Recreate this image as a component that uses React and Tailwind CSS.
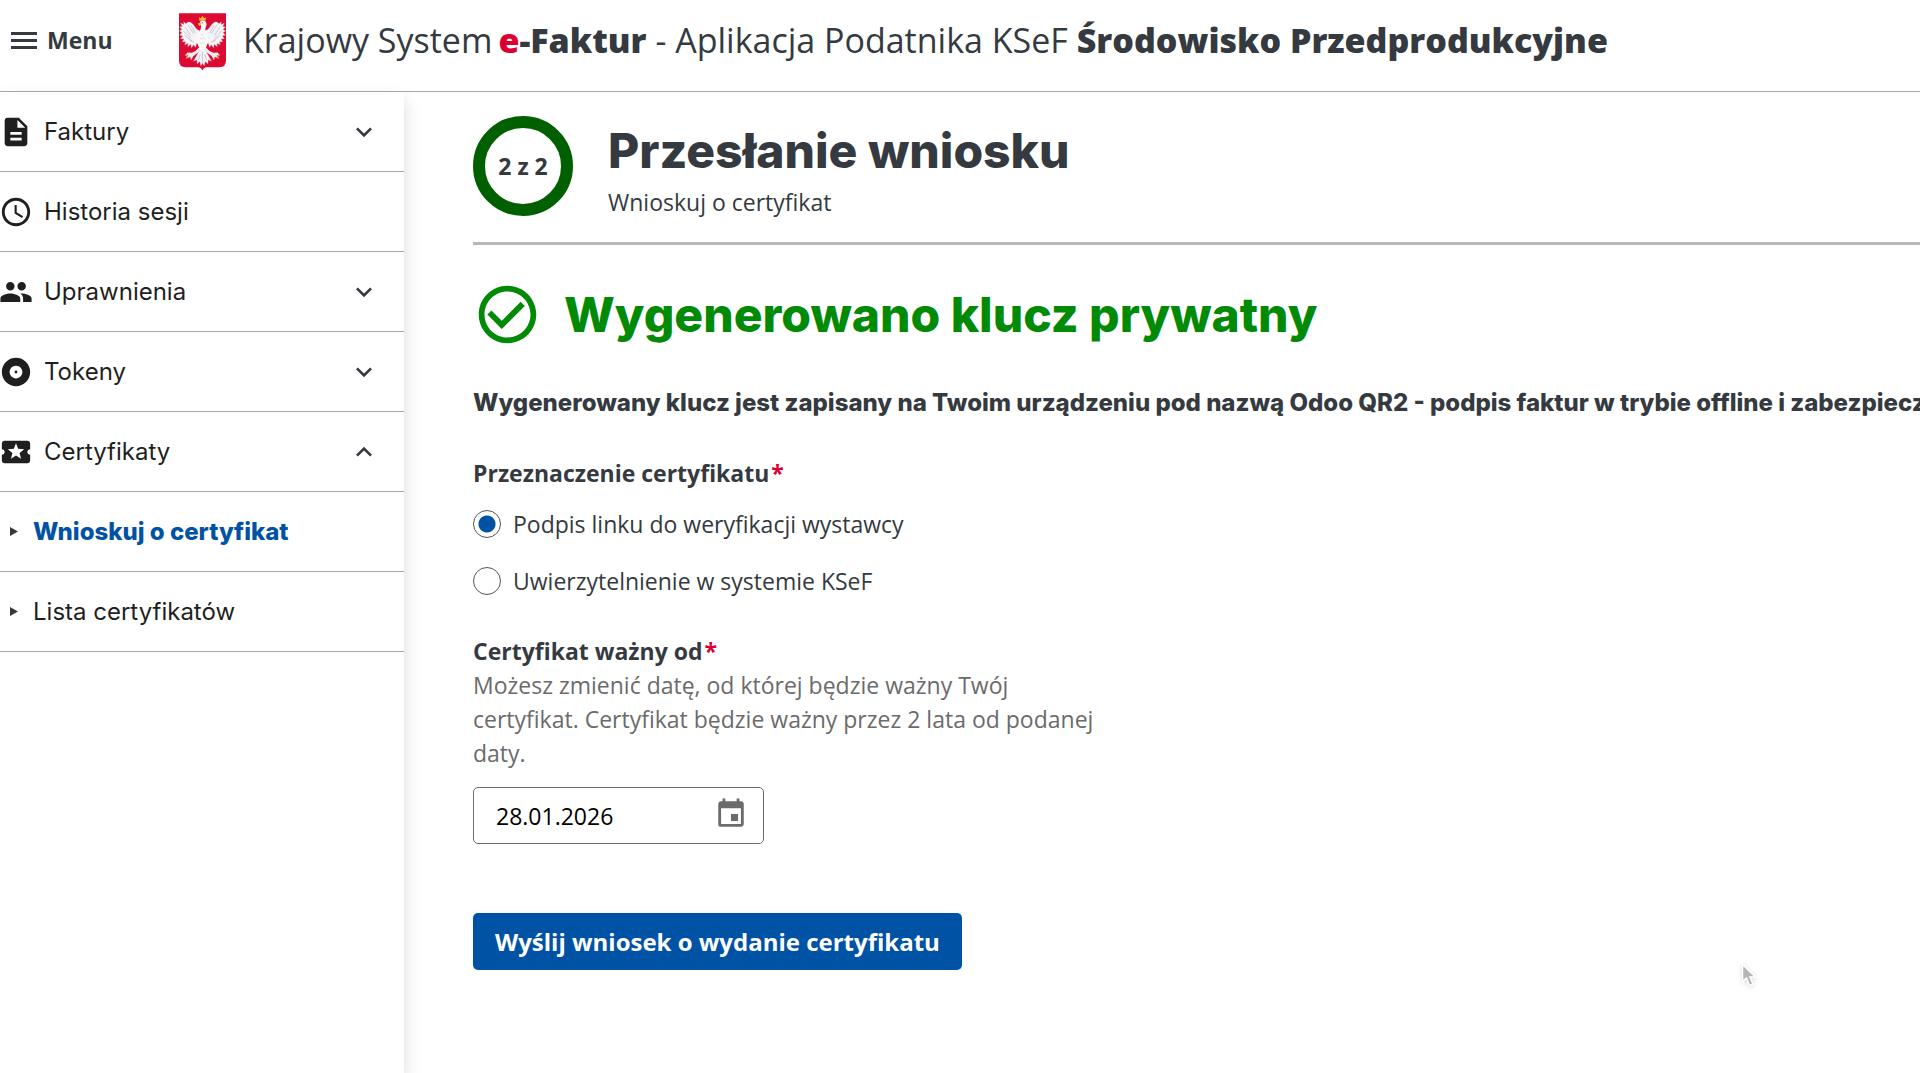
import React, { useState } from "react";
import {
  MdAccessTime,
  MdAlbum,
  MdCheckCircleOutline,
  MdDescription,
  MdEvent,
  MdExpandLess,
  MdExpandMore,
  MdLocalActivity,
  MdPeople,
} from "react-icons/md";

const menuItems = [
  { name: "Faktury", icon: MdDescription, expandable: true },
  { name: "Historia sesji", icon: MdAccessTime, expandable: false },
  { name: "Uprawnienia", icon: MdPeople, expandable: true },
  { name: "Tokeny", icon: MdAlbum, expandable: true },
  { name: "Certyfikaty", icon: MdLocalActivity, expandable: true },
];

const certificateLinks = ["Wnioskuj o certyfikat", "Lista certyfikatów"];

const purposes = [
  { id: "link", label: "Podpis linku do weryfikacji wystawcy" },
  { id: "auth", label: "Uwierzytelnienie w systemie KSeF" },
];

const Emblem = () => (
  <svg viewBox="27 25 140 172" className="w-[47px] h-[58px] shrink-0" role="img" aria-label="Godło Polski">
    <path d="M27 25H167V166Q167 186 147 186H108Q100 187 97 196Q94 187 86 186H47Q27 186 27 166Z" fill="#dc0a32" />
    {/* Wings */}
    <g fill="#f4f3f5" stroke="#cfc6d0" strokeWidth="1">
      <path d="M88 76C80 78 76 66 67 57C61 50 53 49 48 57L41 51L42 59L32 55L37 65L29 66L36 74L28 78L36 83L29 90L38 93L32 101L42 102L37 110L47 110L44 119L54 115L53 125L62 118L64 128L71 119L76 127L80 115L88 118Z" />
      <path d="M106 76C114 78 118 66 127 57C133 50 141 49 146 57L153 51L152 59L162 55L157 65L165 66L158 74L166 78L158 83L165 90L156 93L162 101L152 102L157 110L147 110L150 119L140 115L141 125L132 118L130 128L123 119L118 127L114 115L106 118Z" />
    </g>
    <path
      d="M45 66L62 92M40 78L62 100M44 92L66 108M54 60L70 86M63 62L75 84M58 106L72 112M149 66L132 92M154 78L132 100M150 92L128 108M140 60L124 86M131 62L119 84M136 106L122 112"
      stroke="#bdb2bf"
      strokeWidth="2"
      fill="none"
    />
    {/* Tail and legs */}
    <path d="M88 126L76 138L65 143L52 142L47 149L55 151L51 160L60 155L64 164L70 153L84 142L110 142L124 153L130 164L134 155L143 160L139 151L147 149L142 142L129 143L118 138L106 126Z" fill="#efedf0" />
    <path d="M90 132L78 154L70 168L80 164L81 176L89 169L92 182L97 174L102 182L105 169L113 176L114 164L124 168L116 154L104 132Z" fill="#f4f3f5" stroke="#cfc6d0" />
    <path d="M97 140V172M90 148L85 165M104 148L109 165" stroke="#bdb2bf" strokeWidth="2" />
    <path d="M45 149L52 153L49 160M60 155L64 164M149 149L142 153L145 160M134 155L130 164" stroke="#e0b060" strokeWidth="3" fill="none" />
    {/* Body, neck and head */}
    <path d="M87 58L91 49Q99 43 106 50Q112 59 106 68Q103 75 110 84Q118 103 109 124Q104 136 97 139Q90 136 85 124Q76 103 84 85Q93 75 93 65L91 60Z" fill="#fbfafb" />
    <path d="M92 86L96 91L101 86M88 98L94 103L100 98L106 103M88 112L94 117L100 112L106 117" stroke="#cfc6d0" strokeWidth="2" fill="none" />
    <path d="M93 53L83 56L87 63L93 59Z" fill="#e8b53c" />
    <path d="M88 48L86 37L92 40L97 33L102 40L108 37L106 48Z" fill="#f0b72c" />
    <circle cx="97" cy="54" r="2" fill="#a44a55" />
  </svg>
);

const App = () => {
  const [certOpen, setCertOpen] = useState(true);
  const [purpose, setPurpose] = useState("link");
  const [date, setDate] = useState("28.01.2026");

  return (
    <div className="relative min-h-screen flex flex-col overflow-hidden bg-white text-[#343a40] text-[23px] leading-[34px] font-['Open_Sans',sans-serif]">
      {/* Header */}
      <header className="h-[92px] shrink-0 flex items-start border-b border-[#a9a9a9] pl-[11px] pt-[13px]">
        <button className="flex items-center gap-[10px] h-[54px] w-[168px] font-bold">
          <span className="flex flex-col gap-1">
            <span className="w-[26px] h-[3px] bg-[#343a40]" />
            <span className="w-[26px] h-[3px] bg-[#343a40]" />
            <span className="w-[26px] h-[3px] bg-[#343a40]" />
          </span>
          Menu
        </button>
        <Emblem />
        <p className="flex ml-[17px] h-[54px] items-center text-[34px] whitespace-pre">
          <span className="mr-1.5">Krajowy System</span>
          <span className="font-extrabold text-[#dc0032]">e</span>
          <span className="font-extrabold">-Faktur</span>
          <span> - Aplikacja Podatnika KSeF </span>
          <span className="font-extrabold">Środowisko Przedprodukcyjne</span>
        </p>
      </header>

      <div className="flex flex-1">
        {/* Sidebar */}
        <nav className="w-[404px] shrink-0 shadow-[0_8px_16px_rgba(0,0,0,0.15)] text-2xl text-[#1f1f1f] font-['Inter',sans-serif]">
          {menuItems.map(item => {
            const Icon = item.icon;
            const isCert = item.name === "Certyfikaty";
            const Chevron = isCert && certOpen ? MdExpandLess : MdExpandMore;
            return (
              <button
                key={item.name}
                onClick={() => isCert && setCertOpen(!certOpen)}
                className="w-full h-20 flex items-center border-b border-[#a9a9a9] pr-6 text-left"
              >
                <Icon className="w-[34px] h-[34px] -ml-px mr-[11px]" />
                <span className="flex-1">{item.name}</span>
                {item.expandable && <Chevron className="w-8 h-8 text-[#343a40]" />}
              </button>
            );
          })}
          {certOpen &&
            certificateLinks.map((link, i) => (
              <a
                key={link}
                href="#"
                className={`h-20 flex items-center gap-[15px] border-b border-[#a9a9a9] pl-[10px] ${
                  i === 0 ? "font-extrabold text-[#0052a5]" : ""
                }`}
              >
                <svg viewBox="0 0 8 9" className="w-2 h-[9px] text-[#343a40]">
                  <path d="M0 0L8 4.5L0 9Z" fill="currentColor" />
                </svg>
                {link}
              </a>
            ))}
        </nav>

        {/* Form */}
        <main className="flex-1 min-w-0 pl-[69px] pt-6">
          <div className="flex gap-[35px] pb-[23px] border-b-[3px] border-[#b5b8b5]">
            <div className="w-[100px] h-[100px] shrink-0 rounded-full border-[12px] border-[#006000] flex items-center justify-center font-bold">
              2 z 2
            </div>
            <div>
              <h1 className="text-5xl leading-[69px] font-extrabold font-['Inter',sans-serif]">Przesłanie wniosku</h1>
              <p>Wnioskuj o certyfikat</p>
            </div>
          </div>

          <div className="flex items-center gap-[22px] mt-[35px] text-[#008a05]">
            <MdCheckCircleOutline className="w-[69px] h-[69px] shrink-0" />
            <h2 className="text-5xl leading-[69px] font-extrabold font-['Inter',sans-serif]">Wygenerowano klucz prywatny</h2>
          </div>

          <p className="mt-[37px] text-2xl leading-[34px] font-extrabold whitespace-nowrap font-['Inter',sans-serif]">
            Wygenerowany klucz jest zapisany na Twoim urządzeniu pod nazwą Odoo QR2 - podpis faktur w trybie offline i zabezpieczony
          </p>

          <form onSubmit={e => e.preventDefault()}>
            <fieldset className="mt-9">
              <legend className="font-bold">
                Przeznaczenie certyfikatu<span className="ml-0.5 text-[#dc0032]">*</span>
              </legend>
              <div className="flex flex-col gap-[23px] mt-[17px]">
                {purposes.map(p => (
                  <label key={p.id} className="flex items-center gap-3">
                    <input
                      type="radio"
                      name="purpose"
                      checked={purpose === p.id}
                      onChange={() => setPurpose(p.id)}
                      className="appearance-none w-7 h-7 rounded-full border border-[#555555] bg-white checked:bg-[radial-gradient(circle,#0052a5_8px,#ffffff_9px)]"
                    />
                    {p.label}
                  </label>
                ))}
              </div>
            </fieldset>

            <label htmlFor="valid-from" className="block mt-9 font-bold">
              Certyfikat ważny od<span className="ml-0.5 text-[#dc0032]">*</span>
            </label>
            <p className="max-w-[630px] text-[#6b6b6b]">
              Możesz zmienić datę, od której będzie ważny Twój certyfikat. Certyfikat będzie ważny przez 2 lata od podanej
              daty.
            </p>
            <div className="flex items-center w-[291px] h-[57px] mt-[17px] pl-[22px] pr-[15px] border border-[#6b6b6b] rounded-[5px]">
              <input
                id="valid-from"
                type="text"
                value={date}
                onChange={e => setDate(e.target.value)}
                className="flex-1 min-w-0 text-black outline-none"
              />
              <button type="button" aria-label="Wybierz datę">
                <MdEvent className="w-[34px] h-[34px] mb-1 text-[#6b6b6b]" />
              </button>
            </div>
            <button type="submit" className="h-[57px] mt-[69px] px-[22px] rounded-[5px] bg-[#0052a5] text-white text-2xl font-bold">
              Wyślij wniosek o wydanie certyfikatu
            </button>
          </form>
        </main>
      </div>

      {/* Mouse pointer */}
      <svg viewBox="0 0 16 26" className="absolute left-[1741px] top-[963px] w-4 h-[26px] drop-shadow-sm">
        <path d="M1.500 1.500V18.500L5.500 15L8.500 22.500L12 21L9 14H14.500Z" fill="#b5b5b5" stroke="#ffffff" strokeWidth="1.500" />
      </svg>
    </div>
  );
};

export default App;
